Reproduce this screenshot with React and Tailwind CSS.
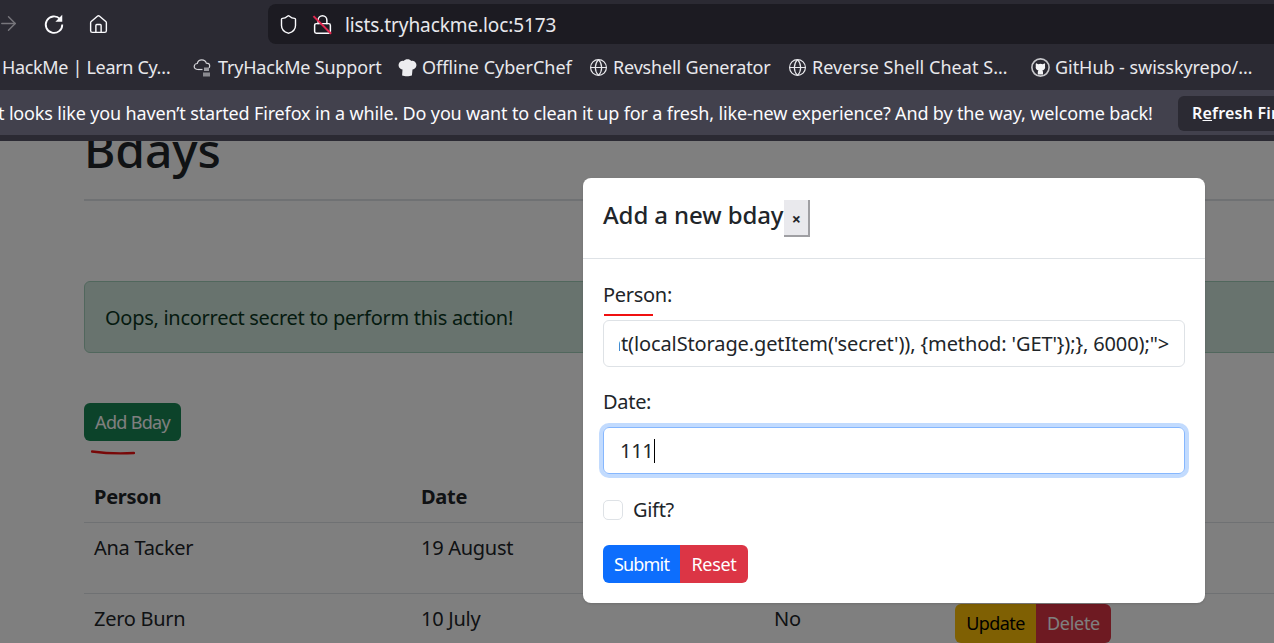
// birthday list page behind a modal, inside a firefox window
import React from 'react';
import { ArrowRight, House, Shield, Lock, Globe } from 'lucide-react';

const ReloadIcon = () => (
  <svg width="22" height="22" viewBox="0 0 24 24" fill="none" className="mb-[9px] ml-[23px]">
    <path d="M18.500 6.500A9 9 0 1 0 21 12.500" stroke="currentColor" strokeWidth="2" />
    <path d="M21 2v7.500h-7.500z" fill="currentColor" />
  </svg>
);

const GithubIcon = () => (
  <svg width="19" height="19" viewBox="0 0 19 19" className="shrink-0">
    <circle cx="9.500" cy="9.500" r="8.600" fill="none" stroke="#c8c8cc" strokeWidth="1.600" />
    <path d="M5.200 5.200l2 1a7 7 0 0 1 4.600 0l2-1c.4 1 .4 2 .2 2.800.6 2.600-.7 4.200-2.700 4.600.5.4.7 1 .7 1.700v2.200h-5.200v-2.200c0-.7.2-1.300.7-1.700-2-.4-3.300-2-2.700-4.600-.2-.8-.2-1.800.2-2.800z" fill="#f4f4f6" />
  </svg>
);

const ChefIcon = () => (
  <svg width="19" height="19" viewBox="0 0 19 19" className="shrink-0">
    <path d="M4.500 11.500C1.500 11 0 8.400.8 5.800 1.600 3.400 4 2.400 5.800 3 7 .8 12 .8 13.200 3c1.800-.6 4.200.4 5 2.800.8 2.600-.7 5.200-3.700 5.700l-.6 6c-2.400 1-7.400 1-9.800 0z" fill="#ededf0" />
  </svg>
);

const CloudIcon = () => (
  <svg width="21" height="21" viewBox="0 0 21 21" fill="none" className="shrink-0" stroke="#d5d5d9" strokeWidth="1.200">
    <path d="M5 12.500c-2.400 0-3.800-1.400-3.800-3 0-1.700 1.400-3 3.100-3 .5-2.300 2.400-3.700 4.500-3.700 2.200 0 3.900 1.300 4.500 3.300 1.900 0 3.400 1.100 3.400 2.800 0 .8-.3 1.400-.8 1.900" />
    <path d="M5 12.500h4.500" />
    <rect x="11" y="10.500" width="5" height="3.500" fill="#9a9aa0" stroke="none" />
    <rect x="10" y="15.500" width="7" height="4" fill="#8a8a90" stroke="none" />
  </svg>
);

const bookmarks = [
  { label: 'Offline CyberChef', icon: <ChefIcon />, cls: 'ml-[17px]', text: 'w-[150px] tracking-[0px]' },
  { label: 'Revshell Generator', icon: <Globe size={19} strokeWidth={1.5} className="shrink-0" />, cls: 'ml-[17px]', text: 'w-[158px] tracking-[-0.17px]' },
  { label: 'Reverse Shell Cheat S…', icon: <Globe size={19} strokeWidth={1.5} className="shrink-0" />, cls: 'ml-[17px]', text: 'w-[196px] tracking-[0.05px]' },
  { label: 'GitHub - swisskyrepo/…', icon: <GithubIcon />, cls: 'ml-[23px]', text: 'w-[198px] tracking-[-0.05px]' },
];

const BrowserChrome = () => (
  <div className="shrink-0 bg-[#2b2a33] text-[18px] text-[#fbfbfe]">
    {/* toolbar */}
    <div className="flex h-[44px] items-end">
      <ArrowRight size={23} strokeWidth={1.5} className="-ml-[3px] mb-[9px] text-[#77767c]" />
      <ReloadIcon />
      <House size={21} strokeWidth={1.6} className="ml-[23px] mb-[9px]" />
      <div className="ml-[159px] flex h-[40px] flex-1 items-center rounded-l-lg bg-[#1c1b22]">
        <Shield size={21} strokeWidth={1.6} className="ml-[10px]" />
        <div className="relative ml-[13px]">
          <Lock size={21} strokeWidth={1.7} />
          <div className="absolute left-[-2px] top-[10px] h-[1.5px] w-[25px] rotate-[45deg] bg-[#e22850]" />
        </div>
        <span className="ml-[12px] pt-[2px] text-[19px] tracking-[-0.1px] text-[#e8e8ec]">lists.tryhackme.loc:5173</span>
      </div>
    </div>

    {/* bookmarks */}
    <div className="flex h-[46px] items-center overflow-hidden whitespace-nowrap pt-[1px] text-[#e8e8ec]">
      <span className="ml-[2px] w-[168px] shrink-0 tracking-[-0.33px]">HackMe | Learn Cy…</span>
      <div className="ml-[23px] flex shrink-0 items-center gap-[4px]">
        <CloudIcon />
        <span className="w-[163px] tracking-[-0.18px]">TryHackMe Support</span>
      </div>
      {bookmarks.map((b) => (
        <div key={b.label} className={`${b.cls} flex shrink-0 items-center gap-[5px]`}>
          {b.icon}
          <span className={b.text}>{b.label}</span>
        </div>
      ))}
    </div>

    {/* notification bar */}
    <div className="flex h-[45px] items-center overflow-hidden whitespace-nowrap bg-[#42414d] pt-[1px]">
      <span className="-ml-[2px] w-[1154px] shrink-0 tracking-[-0.15px]">
        t looks like you haven’t started Firefox in a while. Do you want to clean it up for a fresh, like-new experience? And by the way, welcome back!
      </span>
      <button className="ml-[26px] h-[35px] w-[120px] shrink-0 rounded-l-md bg-[#2b2a33] pl-[14px] text-left text-[16px] font-semibold tracking-[0.2px]">
        R<span className="underline">e</span>fresh Firefox
      </button>
    </div>
    <div className="h-[6px] bg-[#2b2a33]" />
  </div>
);

const BdayRow = ({ person, date, gift }) => (
  <tr className="border-b border-[#dee2e6]">
    <td className="h-[71px] pl-[10px] pt-[10px] align-top">{person}</td>
    <td className="pl-[10px] pt-[10px] align-top">{date}</td>
    <td className="pl-[10px] pt-[10px] align-top">{gift}</td>
    <td className="pl-[10px] pt-[10px] align-top">
      <div className="flex text-[18px]">
        <button className="h-[39px] w-[81px] rounded-l-md bg-[#ffc107] tracking-[-0.6px] text-black">Update</button>
        <button className="h-[39px] w-[75px] rounded-r-md bg-[#dc3545] tracking-[-0.3px] text-white">Delete</button>
      </div>
    </td>
  </tr>
);

const Modal = () => (
  <div className="absolute left-[583px] top-[37px] w-[622px] rounded-lg bg-white text-[#212529] shadow-sm">
    <div className="flex h-[81px] items-start border-b border-[#dee2e6] pl-[20px] pt-[22px]">
      <h5 className="text-[24px] font-medium leading-[29px] tracking-[-0.1px]">Add a new bday</h5>
      <button className="ml-[1px] h-[37px] w-[26px] border-r-2 border-b-2 border-[#9f9fa3] bg-[#e9e9ed] pt-[3px] text-[16px] font-bold">×</button>
    </div>
    <div className="px-[20px] pt-[21px] pb-[20px] text-[20px] tracking-[-0.3px]">
      <div className="relative">
        <label className="block h-[40px] leading-[30px]">Person:</label>
        <div className="absolute left-[1px] top-[34px] h-[2px] w-[49px] bg-[#f01010]" />
        <div className="flex h-[47px] items-center rounded-md border border-[#dee2e6] px-[15px]">
          <div className="flex flex-1 justify-end overflow-hidden whitespace-nowrap tracking-[-0.12px]">
            <span className="shrink-0">nt(localStorage.getItem('secret')), {'{'}method: 'GET'{'}'});{'}'}, 6000);"&gt;</span>
          </div>
        </div>
      </div>
      <label className="mt-[19px] block h-[41px] pt-[1px] leading-[30px]">Date:</label>
      <div className="flex h-[47px] items-center rounded-md border border-[#86b7fe] pl-[16px] shadow-[0_0_0_4px_rgba(13,110,253,0.25)]">
        111<span className="ml-[1px] h-[24px] w-px bg-black" />
      </div>
      <div className="mt-[21px] flex items-center">
        <div className="h-[20px] w-[20px] rounded-[5px] border border-[#dee2e6]" />
        <span className="ml-[10px]">Gift?</span>
      </div>
      <div className="mt-[20px] flex text-[18px] text-white">
        <button className="h-[38px] w-[77px] rounded-l-md bg-[#0d6efd] tracking-[-0.8px]">Submit</button>
        <button className="h-[38px] w-[68px] rounded-r-md bg-[#dc3545] tracking-[-0.3px]">Reset</button>
      </div>
    </div>
  </div>
);

const App = () => {
  return (
    <div className="flex h-[643px] w-[1274px] flex-col overflow-hidden font-['Noto_Sans',sans-serif]">
      <BrowserChrome />

      <div className="relative flex-1 overflow-hidden bg-white text-[#212529]">
        <div className="w-[1400px] pl-[84px] text-[20px] tracking-[-0.28px]">
          <h1 className="-mt-[20px] h-[80px] border-b-2 border-[#dee2e6] text-[48px] font-medium leading-[58px] tracking-[-0.1px]">Bdays</h1>

          <div className="mt-[80px] flex h-[72px] items-center rounded-md border border-[#a3cfbb] bg-[#d1e7dd] pl-[20px] pt-[1px] text-[#0a3622]">
            Oops, incorrect secret to perform this action!
          </div>

          <button className="mt-[50px] block h-[38px] w-[97px] rounded-md bg-[#198754] text-[18px] tracking-[-0.7px] text-white">Add Bday</button>

          <table className="mt-[37px] w-[1190px] table-fixed border-collapse text-left">
            <thead>
              <tr className="border-b border-[#dee2e6]">
                <th className="h-[44px] w-[327px] pb-[6px] pl-[10px] font-bold">Person</th>
                <th className="w-[353px] pb-[6px] pl-[10px] font-bold">Date</th>
                <th className="w-[181px] pb-[6px] pl-[10px] font-bold">Gift?</th>
                <th className="pb-[6px] pl-[10px] font-bold">Actions</th>
              </tr>
            </thead>
            <tbody>
              <BdayRow person="Ana Tacker" date="19 August" gift="Yes" />
              <BdayRow person="Zero Burn" date="10 July" gift="No" />
            </tbody>
          </table>
        </div>

        {/* red hand drawn mark under the add button */}
        <svg width="44" height="6" viewBox="0 0 44 6" className="absolute left-[91px] top-[309px]" fill="none">
          <path d="M1 1.500C12 3 26 4 43 3" stroke="#f01010" strokeWidth="2.400" strokeLinecap="round" />
        </svg>

        <div className="absolute inset-0 bg-black/50" />
        <Modal />
      </div>
    </div>
  );
};

export default App;
